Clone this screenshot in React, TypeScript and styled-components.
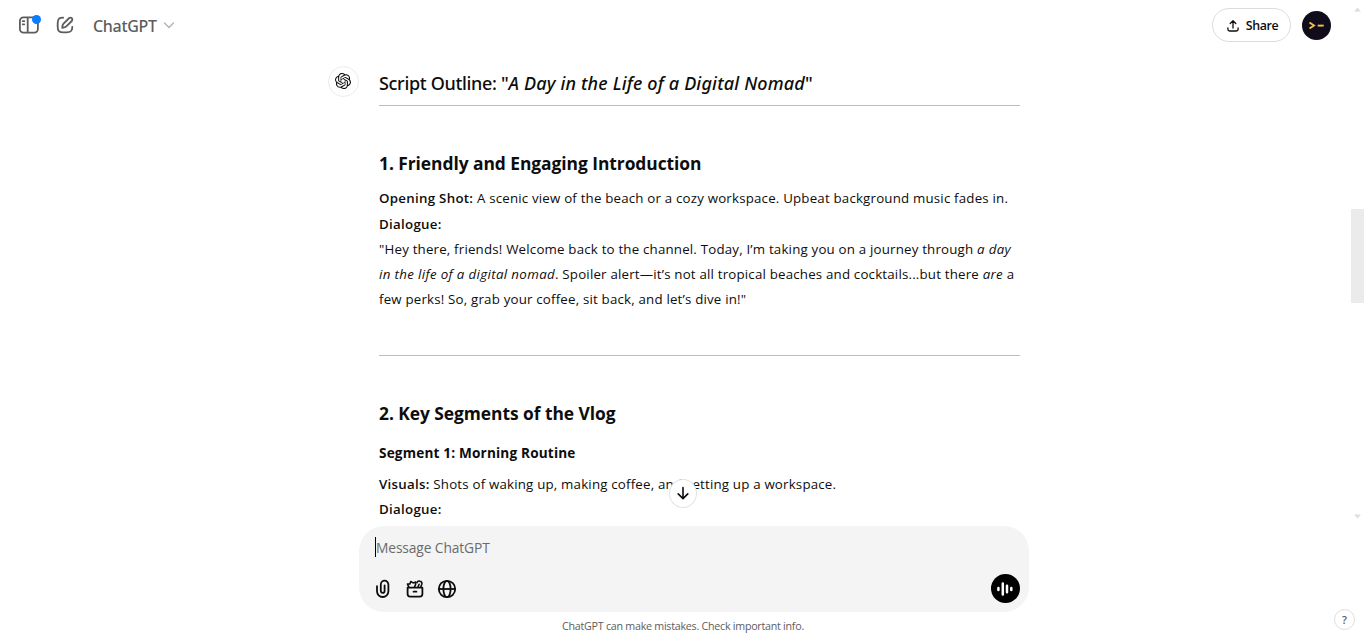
import styled, { createGlobalStyle, css } from "styled-components";
import { SiOpenai } from "react-icons/si";

const GlobalStyle = createGlobalStyle`
  * {
    box-sizing: border-box;
  }
  body {
    margin: 0;
    background-color: #fff;
    color: #0d0d0d;
    font-family: "Open Sans", "Noto Sans", sans-serif;
    overflow: hidden;
  }
`;

const Page = styled.div`
  position: relative;
  display: flex;
  flex-direction: column;
  width: 1366px;
  height: 641px;
  overflow: hidden;
`;

const Header = styled.header`
  display: flex;
  justify-content: space-between;
  align-items: center;
  height: 50px;
  flex-shrink: 0;
  padding: 0 35px 0 18px;
`;

const HeaderGroup = styled.div<{ $gap: number }>`
  display: flex;
  align-items: center;
  gap: ${({ $gap }) => $gap}px;
`;

const IconButton = styled.button`
  position: relative;
  display: flex;
  padding: 0;
  border: none;
  background: none;
  color: #5d5d5d;
`;

const Dot = styled.span`
  position: absolute;
  top: 1px;
  right: -1px;
  width: 9px;
  height: 9px;
  border-radius: 50%;
  background-color: #0a7cff;
`;

const ModelButton = styled.button`
  display: flex;
  align-items: center;
  gap: 6px;
  margin-left: 3px;
  padding: 1px 0 0;
  border: none;
  background: none;
  color: #5d5d5d;
  font: 500 16px/22px "Noto Sans", sans-serif;
  letter-spacing: -0.3px;
`;

const ShareButton = styled.button`
  display: flex;
  align-items: center;
  justify-content: center;
  gap: 6px;
  width: 79px;
  height: 34px;
  padding: 1px 0 0 1px;
  border: 1px solid #dcdcdc;
  border-radius: 17px;
  background-color: #fff;
  color: #0d0d0d;
  font: 600 12.4px/18px "Open Sans", sans-serif;
  letter-spacing: -0.4px;
`;

const Avatar = styled.div`
  display: flex;
  width: 29px;
  height: 29px;
  border-radius: 50%;
  background-color: #100c1c;
`;

const Thread = styled.main`
  display: flex;
  flex: 1;
  gap: 20px;
  min-height: 0;
  padding: 16px 0 0 328px;
  overflow: hidden;
`;

const BotAvatar = styled.div`
  display: flex;
  align-items: center;
  justify-content: center;
  flex-shrink: 0;
  width: 31px;
  height: 31px;
  padding: 0 1px 1px 0;
  border: 1px solid #ececec;
  border-radius: 50%;
`;

const Message = styled.article`
  width: 641px;
  white-space: nowrap;
`;

const textSizes = {
  title: css`
    font-family: "Noto Sans", sans-serif;
    font-size: 18px;
    font-weight: 500;
    line-height: 26px;
    padding-top: 4px;
    letter-spacing: -0.32px;

    em {
      letter-spacing: 0.18px;
    }
  `,
  section: css`
    font-size: 17.4px;
    font-weight: 700;
    line-height: 26px;
    letter-spacing: -0.05px;
  `,
  segment: css`
    font-size: 13.6px;
    font-weight: 700;
    line-height: 22px;
    margin: 16px 0 8px;
    letter-spacing: 0.17px;
  `,
};

const Heading = styled.div<{ $size: keyof typeof textSizes }>`
  ${({ $size }) => textSizes[$size]}
`;

const Line = styled.div<{ $spacing?: number }>`
  font-size: 13.3px;
  line-height: 25.2px;
  letter-spacing: ${({ $spacing = 0.19 }) => $spacing}px;

  strong {
    font-weight: 600;
    letter-spacing: 0.28px;
  }

  em {
    letter-spacing: 0.35px;
  }
`;

const Divider = styled.hr<{ $top: number }>`
  height: 1px;
  margin: ${({ $top }) => $top}px 0 44px;
  border: none;
  background-color: #bdbdbd;
`;

const Paragraph = styled.div<{ $top?: number }>`
  margin-top: ${({ $top = 0 }) => $top}px;
`;

const ScrollDown = styled.button`
  position: absolute;
  top: 479px;
  left: 669px;
  display: flex;
  align-items: center;
  justify-content: center;
  width: 28px;
  height: 29px;
  padding: 0 0 1px;
  border: 1px solid #e3e3e3;
  border-radius: 50%;
  background-color: #fff;
`;

const Composer = styled.div`
  display: flex;
  flex-direction: column;
  justify-content: space-between;
  flex-shrink: 0;
  width: 670px;
  height: 86px;
  margin-left: 359px;
  padding: 11px 9px 9px 16px;
  border-radius: 25px;
  background-color: #f4f4f4;
`;

const Prompt = styled.div`
  display: flex;
  align-items: center;
  height: 21px;
  color: #6b6b6b;
  font-size: 13.8px;
  letter-spacing: -0.12px;
`;

const Caret = styled.span`
  width: 1px;
  height: 20px;
  margin-bottom: 1px;
  background-color: #000;
`;

const Tools = styled.div`
  display: flex;
  align-items: center;
  justify-content: space-between;
`;

const ToolGroup = styled.div`
  display: flex;
  gap: 10px;
  margin-left: -3px;
`;

const VoiceButton = styled.button`
  display: flex;
  align-items: center;
  justify-content: center;
  width: 29px;
  height: 29px;
  padding: 0 1px 0 0;
  border: none;
  border-radius: 50%;
  background-color: #000;
`;

const Footer = styled.footer`
  flex-shrink: 0;
  height: 29px;
  padding-top: 5px;
  text-align: center;
  color: #5d5d5d;
  font-size: 10.7px;
  line-height: 18px;
  letter-spacing: -0.25px;
`;

const HelpButton = styled.button`
  position: absolute;
  right: 11px;
  bottom: 11px;
  width: 21px;
  height: 21px;
  padding: 0;
  border: 1px solid #dedede;
  border-radius: 50%;
  background-color: #fff;
  color: #5d5d5d;
  font: 600 10.8px/18px "Open Sans", sans-serif;
`;

const Scrollbar = styled.div`
  position: absolute;
  top: 0;
  right: 2px;
  display: flex;
  flex-direction: column;
  align-items: center;
  justify-content: space-between;
  width: 13px;
  height: 524px;
  padding: 7px 0 5px;
`;

const Thumb = styled.div`
  position: absolute;
  top: 209px;
  width: 13px;
  height: 94px;
  background-color: #ebebeb;
`;

const SidebarIcon = () => (
  <svg width="22" height="22" viewBox="0 0 22 22" fill="none" stroke="currentColor" strokeWidth="1.8">
    <rect x="1.9" y="3.4" width="18" height="15.2" rx="3.6" />
    <path d="M9.7 3.5v15" />
    <path d="M4.7 7.2h1.6M4.7 10.3h1.6" strokeWidth="1.7" strokeLinecap="round" />
  </svg>
);

const EditIcon = () => (
  <svg width="22" height="22" viewBox="0 0 24 24" fill="none">
    <path
      d="M15.6729 3.91287C16.8918 2.69392 18.8682 2.69392 20.0871 3.91287C21.3061 5.13182 21.3061 7.10813 20.0871 8.32708L14.1499 14.2643C13.3849 15.0293 12.3925 15.5255 11.3215 15.6785L9.14142 15.9899C8.82983 16.0344 8.51546 15.9297 8.29289 15.7071C8.07033 15.4845 7.96554 15.1701 8.01005 14.8586L8.32149 12.6785C8.47449 11.6075 8.97072 10.615 9.7357 9.85006L15.6729 3.91287ZM18.6729 5.32708C18.235 4.88918 17.525 4.88918 17.0871 5.32708L11.1499 11.2643C10.6909 11.7233 10.3932 12.3187 10.3014 12.9613L10.1785 13.8215L11.0386 13.6986C11.6812 13.6068 12.2767 13.3091 12.7357 12.8501L18.6729 6.91287C19.1108 6.47497 19.1108 5.76499 18.6729 5.32708Z"
      fill="currentColor"
    />
    <path
      d="M10 4C6 4 4 4.5 4 10.4V13.6C4 18.5 5.5 20 10.4 20H13.6C18.5 20 20 18.5 20 14"
      stroke="currentColor"
      strokeWidth="2"
      strokeLinecap="round"
    />
  </svg>
);

const ChevronIcon = () => (
  <svg width="12" height="12" viewBox="0 0 12 12" fill="none" stroke="#b4b4b4" strokeWidth="1.4">
    <path d="M1.5 3 6 7.5 10.5 3" strokeLinecap="round" strokeLinejoin="round" />
  </svg>
);

const ShareIcon = () => (
  <svg width="14" height="14" viewBox="0 0 14 14" fill="none" stroke="currentColor" strokeWidth="1.3">
    <path d="M7 9V2M4.2 4.5 7 1.8l2.8 2.7" strokeLinecap="round" strokeLinejoin="round" />
    <path d="M1.9 9v1.3c0 1.2.6 1.7 1.8 1.7h6.6c1.2 0 1.8-.5 1.8-1.7V9" strokeLinecap="round" />
  </svg>
);

const TerminalIcon = () => (
  <svg width="29" height="29" viewBox="0 0 29 29" fill="none" stroke="#f2c14e" strokeWidth="1.9">
    <path d="m7.5 11.5 4.5 3-4.5 3" />
    <path d="M15.7 14.6h6" />
  </svg>
);

const ArrowDownIcon = () => (
  <svg width="16" height="16" viewBox="0 0 16 16" fill="none" stroke="#0d0d0d" strokeWidth="1.6">
    <path d="M8 2.5v11M3.2 8.9 8 13.6l4.8-4.7" strokeLinecap="round" strokeLinejoin="round" />
  </svg>
);

const ClipIcon = () => (
  <svg width="22" height="22" viewBox="0 0 22 22" fill="none" stroke="#0d0d0d" strokeWidth="1.8">
    <path
      d="M5 8.2v5.1a5.7 5.7 0 0 0 11.4 0V6.5a3.8 3.8 0 0 0-7.6 0v6.4a1.9 1.9 0 0 0 3.8 0V7.4"
      strokeLinecap="round"
    />
  </svg>
);

const ToolboxIcon = () => (
  <svg width="22" height="22" viewBox="0 0 22 22" fill="none" stroke="#0d0d0d" strokeWidth="1.8">
    <path d="M3.6 9.7h14.8v6.4a2.5 2.5 0 0 1-2.5 2.5H6.1a2.5 2.5 0 0 1-2.5-2.5z" strokeLinejoin="round" />
    <path d="M9.6 13.7h2.8" strokeLinecap="round" />
    <path
      d="M4.9 9.2 3.5 6.1l2.5-.2.7-2.4 2.4 1.4 2.5-.9v2.7l-1.2 2.5"
      strokeWidth="1.6"
      strokeLinejoin="round"
      strokeLinecap="round"
    />
    <path
      d="M12.9 4.6c.5-1.3 1.7-1.8 2.9-1.5 1.6.3 2.5 1.7 2 3.2L16.7 9.3M13.9 9.2l1.2-2.9"
      strokeWidth="1.6"
      strokeLinecap="round"
    />
  </svg>
);

const GlobeIcon = () => (
  <svg width="22" height="22" viewBox="0 0 22 22" fill="none" stroke="#0d0d0d" strokeWidth="1.8">
    <circle cx="11" cy="11" r="8.2" />
    <ellipse cx="11" cy="11" rx="3.6" ry="8.2" />
    <path d="M2.8 11h16.4" />
  </svg>
);

const VoiceIcon = () => (
  <svg width="20" height="20" viewBox="0 0 20 20" stroke="#fff" strokeWidth="2.5" strokeLinecap="round">
    <path d="M3.4 8.9v2.2M7.8 4.5v11M12 6.8v6.4M16.3 8.9v2.2" />
  </svg>
);

const App = () => {
  return (
    <Page>
      <GlobalStyle />
      <Header>
        <HeaderGroup $gap={14}>
          <IconButton aria-label="Open sidebar">
            <SidebarIcon />
            <Dot />
          </IconButton>
          <IconButton aria-label="New chat">
            <EditIcon />
          </IconButton>
          <ModelButton>
            ChatGPT
            <ChevronIcon />
          </ModelButton>
        </HeaderGroup>
        <HeaderGroup $gap={11}>
          <ShareButton>
            <ShareIcon />
            Share
          </ShareButton>
          <Avatar>
            <TerminalIcon />
          </Avatar>
        </HeaderGroup>
      </Header>

      <Thread>
        <BotAvatar>
          <SiOpenai size={16} />
        </BotAvatar>
        <Message>
          <Heading $size="title">
            Script Outline: "<em>A Day in the Life of a Digital Nomad</em>"
          </Heading>
          <Divider $top={9} />
          <Heading $size="section">1. Friendly and Engaging Introduction</Heading>
          <Paragraph $top={10.4}>
            <Line>
              <strong>Opening Shot:</strong> A scenic view of the beach or a cozy workspace. Upbeat background music fades in.
            </Line>
            <Line>
              <strong>Dialogue:</strong>
            </Line>
            <Line>
              "Hey there, friends! Welcome back to the channel. Today, I’m taking you on a journey through <em>a day</em>
            </Line>
            <Line>
              <em>in the life of a digital nomad</em>. Spoiler alert—it’s not all tropical beaches and cocktails...but there <em>are</em> a
            </Line>
            <Line>few perks! So, grab your coffee, sit back, and let’s dive in!"</Line>
          </Paragraph>
          <Divider $top={42.6} />
          <Heading $size="section">2. Key Segments of the Vlog</Heading>
          <Heading $size="segment">Segment 1: Morning Routine</Heading>
          <Line>
            <strong>Visuals:</strong> Shots of waking up, making coffee, and setting up a workspace.
          </Line>
          <Line>
            <strong>Dialogue:</strong>
          </Line>
        </Message>
      </Thread>

      <Composer>
        <Prompt>
          <Caret />
          Message ChatGPT
        </Prompt>
        <Tools>
          <ToolGroup>
            <ClipIcon />
            <ToolboxIcon />
            <GlobeIcon />
          </ToolGroup>
          <VoiceButton aria-label="Voice mode">
            <VoiceIcon />
          </VoiceButton>
        </Tools>
      </Composer>
      <Footer>ChatGPT can make mistakes. Check important info.</Footer>

      <ScrollDown aria-label="Scroll to bottom">
        <ArrowDownIcon />
      </ScrollDown>
      <HelpButton>?</HelpButton>
      <Scrollbar>
        <svg width="7" height="5" viewBox="0 0 7 5" fill="#dedede">
          <path d="M0 4.5 3.5.5 7 4.5z" />
        </svg>
        <Thumb />
        <svg width="7" height="5" viewBox="0 0 7 5" fill="#dedede">
          <path d="M0 .5 3.5 4.5 7 .5z" />
        </svg>
      </Scrollbar>
    </Page>
  );
};

export default App;
